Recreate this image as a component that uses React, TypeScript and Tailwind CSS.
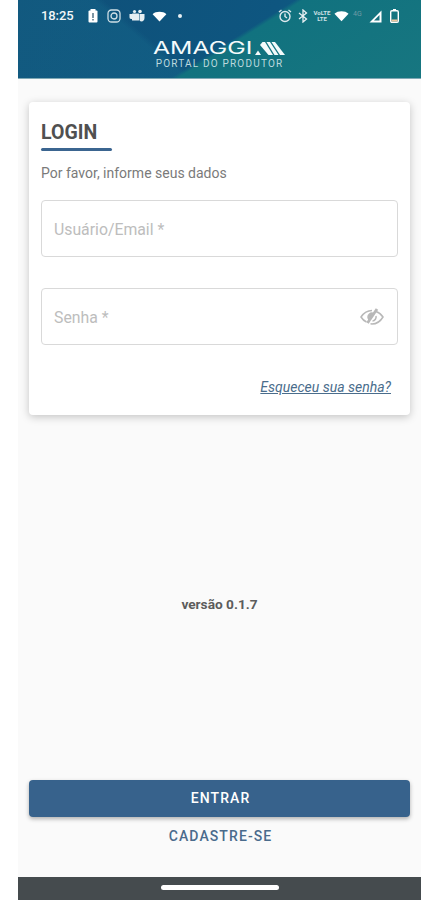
import React from 'react';

const roboto = "font-['Roboto',sans-serif]";

function Diamond({ className }: { className?: string }) {
  return (
    <svg viewBox="0 0 16 12" className={className} fill="#fff">
      <path d="M0.5 3.5 C4 0 12 0 15.5 3.5 L8 11.5 Z" />
    </svg>
  );
}

function StatusLeft() {
  return (
    <div className="flex items-center">
      <span className="text-[13px] font-medium text-[#f1f6f8] w-[35px] tracking-[-0.1px]">18:25</span>
      <svg viewBox="0 0 10 14" className="w-[10px] h-[14px] ml-[12px]">
        <rect x="2.5" y="0" width="5" height="2" fill="#fff" />
        <rect x="0.5" y="1.5" width="9" height="12" rx="1" fill="#fff" />
        <rect x="4.3" y="4" width="1.4" height="5" fill="#45687c" />
        <rect x="4.3" y="10" width="1.4" height="1.5" fill="#45687c" />
      </svg>
      <svg viewBox="0 0 14 14" className="w-[14px] h-[14px] ml-[9px]" fill="none" stroke="#cfdfe6" strokeWidth="1.3">
        <rect x="1" y="1" width="12" height="12" rx="3.5" />
        <circle cx="7" cy="7" r="3" />
      </svg>
      <svg viewBox="0 0 16 14" className="w-[16px] h-[14px] ml-[8px]" fill="#e8f0f3">
        <circle cx="11" cy="2.5" r="1.8" />
        <circle cx="5.5" cy="2.5" r="1.6" />
        <rect x="3" y="4.5" width="7" height="7" rx="0.5" />
        <path d="M0.5 5 H4 V10 H2 C1 10 0.5 9 0.5 8 Z" />
        <path d="M10.5 5 H15.5 V9 C15.5 11 14 12.5 12.5 12.5 C11 12.5 10.5 11.5 10.5 11 Z" />
      </svg>
      <Diamond className="w-[15px] h-[11px] ml-[7px]" />
      <span className="w-[4px] h-[4px] rounded-full bg-[#e8f0f3] ml-[11px]" />
    </div>
  );
}

function StatusRight() {
  return (
    <div className="flex items-center">
      <svg viewBox="0 0 14 14" className="w-[14px] h-[14px]" fill="none" stroke="#dfe9ee" strokeWidth="1.4">
        <circle cx="7" cy="7.5" r="5" />
        <path d="M7 4.5 V7.5 L9 9" />
        <path d="M1 3 L3.5 1 M13 3 L10.5 1" />
      </svg>
      <svg viewBox="0 0 10 14" className="w-[10px] h-[14px] ml-[6px]" fill="none" stroke="#e8f0f3" strokeWidth="1.3">
        <path d="M1 4 L8.5 10 L5 13 V1 L8.5 4 L1 10" />
      </svg>
      <div className="ml-[7px] w-[14px] flex flex-col items-center text-[6px] leading-[6px] font-bold text-[#cfe0e5]">
        <span>VoLTE</span>
        <span>LTE</span>
      </div>
      <Diamond className="w-[15px] h-[12px] ml-[5px]" />
      <span className="ml-[4px] w-[13px] text-[7px] text-[#6f9ba6] leading-none -mt-[3px]">4G</span>
      <svg viewBox="0 0 13 13" className="w-[13px] h-[13px] ml-[3px]">
        <path d="M12.5 0.5 V12.5 H0.5 Z" fill="#fff" />
        <path d="M10.5 5 V10.5 H5 Z" fill="#17717f" />
      </svg>
      <svg viewBox="0 0 9 14" className="w-[9px] h-[14px] ml-[8px]">
        <rect x="3" y="0" width="3" height="2" fill="#fff" />
        <rect x="0.7" y="1.7" width="7.6" height="11.6" rx="1.2" fill="none" stroke="#fff" strokeWidth="1.4" />
        <rect x="1.5" y="10.5" width="6" height="2" fill="#f0c9a0" />
      </svg>
    </div>
  );
}

function AmaggiLogo() {
  return (
    <div className="flex flex-col items-center">
      <div className="flex items-center h-[14px]">
        <span className="w-[99px] -ml-[2px] origin-left scale-x-[1.46] text-[#f4fafb] text-[17px] font-normal leading-none font-['Inter',sans-serif]">
          AMAGGI
        </span>
        <svg viewBox="0 0 30 13" className="w-[30px] h-[13px] ml-[3px]" fill="#f4fafb">
          <path d="M0 13 L3 8.5 L6 13 Z" />
          <path d="M5 3 L7.5 0 H10 L18 13 H13.5 Z" />
          <path d="M11.5 0 H15 L23.5 13 H19.5 Z" />
          <path d="M16.5 0 H20 L30 13 H25 Z" />
        </svg>
      </div>
      <span className="mt-[3px] text-[10px] leading-[11px] tracking-[1.2px] text-[#bcd9de]">PORTAL DO PRODUTOR</span>
    </div>
  );
}

function EyeOff() {
  return (
    <svg viewBox="0 0 24 20" className="w-[24px] h-[20px]" fill="none" stroke="#b8b8b8" strokeWidth="1.5">
      <path d="M12 3.5 C8 3.5 4 5.5 1 10 C2.5 12.5 4.5 14 6.5 15" />
      <path d="M16 4.5 C19 5.5 21.5 7.5 23 10 C20 15 16 17 12 17 L10.5 16.8" />
      <path d="M12 6 C10 6 8 8 8 10 C8 11 8.3 11.6 8.7 12.2 L13.4 6.3 C13 6.1 12.5 6 12 6 Z" fill="#b8b8b8" />
      <path d="M7.5 16 L17 2" strokeWidth="2.8" />
      <path d="M16 9 C16.5 11 15 14 12.5 14" />
    </svg>
  );
}

function Field({ label, children }: { label: string; children?: React.ReactNode }) {
  return (
    <div className="h-[57px] rounded-[4px] border border-[#d9d9d9] bg-white flex items-center justify-between pl-[12px] pr-[13px]">
      <span className="pt-[3px] text-[15.8px] text-[#bdbdbd]">{label}</span>
      {children}
    </div>
  );
}

export default function App() {
  return (
    <div className={`${roboto} w-[436px] h-[900px] bg-white overflow-hidden pl-[18px] pr-[15px]`}>
      <div className="h-full bg-[#fafafa] flex flex-col">
        <header className="h-[79px] shrink-0 bg-[linear-gradient(148deg,transparent_52.5%,#11727f_54%,#177680_100%),linear-gradient(220deg,transparent_64%,rgba(25,115,145,0.28)_66%),linear-gradient(112deg,#0f4f78_0%,#0e5680_60%,#0e6a86_100%)] border-b border-[#7fa8b4] flex flex-col">
          <div className="flex items-center justify-between pl-[23px] pr-[22px] pt-[1px] h-[31px]">
            <StatusLeft />
            <StatusRight />
          </div>
          <div className="mt-[10px] flex justify-center">
            <AmaggiLogo />
          </div>
        </header>

        <main className="flex-1 flex flex-col px-[11px] pt-[23px]">
          <section className="h-[313px] bg-white rounded-[4px] shadow-[0_2px_8px_rgba(0,0,0,0.22)] px-[12px] pt-[19px]">
            <h1 className="text-[19.5px] leading-[23px] font-bold text-[#505050]">LOGIN</h1>
            <div className="mt-[4px] h-[3px] w-[71px] rounded-full bg-[#3b6590]" />
            <p className="mt-[12px] text-[14px] leading-[20px] text-[#7a7a7a]">Por favor, informe seus dados</p>
            <div className="mt-[17px] flex flex-col gap-[31px]">
              <Field label="Usuário/Email *" />
              <Field label="Senha *">
                <EyeOff />
              </Field>
            </div>
            <div className="mt-[32px] flex justify-end pr-[7px]">
              <a className="text-[14px] italic underline text-[#4a6d8c]">Esqueceu sua senha?</a>
            </div>
          </section>

          <div className="mt-[179px] text-center text-[13.7px] font-bold text-[#5c5c5c]">versão 0.1.7</div>

          <button className="mt-[165px] h-[37px] pl-[2px] rounded-[4px] bg-[#37628c] shadow-[0_2px_4px_rgba(0,0,0,0.3)] text-white text-[14px] font-medium tracking-[1.1px]">
            ENTRAR
          </button>
          <div className="mt-[9px] pl-[2px] text-center text-[14px] font-medium tracking-[1.1px] text-[#4a6b8c]">CADASTRE-SE</div>
        </main>

        <footer className="h-[23px] shrink-0 bg-[#454b4e] flex justify-center pt-[8px]">
          <span className="w-[118px] h-[5px] rounded-full bg-white" />
        </footer>
      </div>
    </div>
  );
}
